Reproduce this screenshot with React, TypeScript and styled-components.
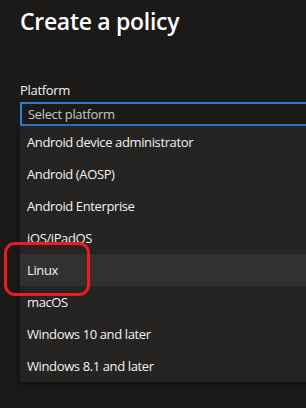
import React from "react";
import styled, { createGlobalStyle } from "styled-components";

const Global = createGlobalStyle`
  html, body {
    margin: 0;
    padding: 0;
    background: #1b1a19;
    overflow: hidden;
  }
  body {
    font-family: "Open Sans", "Noto Sans", sans-serif;
  }
`;

const Page = styled.div`
  position: relative;
  width: 306px;
  height: 408px;
  padding-left: 20px;
  box-sizing: border-box;
  overflow: hidden;
`;

const Title = styled.h1`
  margin: 0;
  padding-top: 4px;
  font-size: 23px;
  line-height: 34px;
  font-weight: 600;
  letter-spacing: -0.3px;
  color: #ffffff;
  white-space: nowrap;
`;

const Field = styled.div`
  margin-top: 42px;
  display: flex;
  flex-direction: column;
  width: 320px;
`;

const Label = styled.label`
  font-size: 13px;
  line-height: 20px;
  letter-spacing: -0.3px;
  color: #f3f2f1;
  margin-bottom: 2px;
`;

const SelectBox = styled.div`
  height: 24px;
  box-sizing: border-box;
  border: 2px solid #2b7cd3;
  display: flex;
  align-items: center;
  padding-left: 6px;
  font-size: 13px;
  letter-spacing: -0.35px;
  color: #c8c6c4;
`;

const List = styled.ul`
  margin: 0;
  padding: 0;
  list-style: none;
  background: #252423;
  border-radius: 0 0 3px 3px;
  box-shadow: 0 2px 6px rgba(0, 0, 0, 0.4);
`;

const Item = styled.li<{ $hover?: boolean }>`
  height: 32px;
  display: flex;
  align-items: center;
  padding-left: 7px;
  font-size: 13px;
  letter-spacing: -0.38px;
  color: #f3f2f1;
  background: ${(p) => (p.$hover ? "#323130" : "transparent")};
`;

const Highlight = styled.div`
  position: absolute;
  left: 4px;
  top: 242px;
  width: 86px;
  height: 54px;
  box-sizing: border-box;
  border: 3.5px solid #ed1c24;
  border-radius: 11px;
  pointer-events: none;
`;

const items = [
  "Android device administrator",
  "Android (AOSP)",
  "Android Enterprise",
  "iOS/iPadOS",
  "Linux",
  "macOS",
  "Windows 10 and later",
  "Windows 8.1 and later",
];

export default function App() {
  return (
    <>
      <Global />
      <Page>
        <Title>Create a policy</Title>
        <Field>
          <Label>Platform</Label>
          <SelectBox>Select platform</SelectBox>
          <List>
            {items.map((t) => (
              <Item key={t} $hover={t === "Linux"}>
                {t}
              </Item>
            ))}
          </List>
        </Field>
        <Highlight />
      </Page>
    </>
  );
}
